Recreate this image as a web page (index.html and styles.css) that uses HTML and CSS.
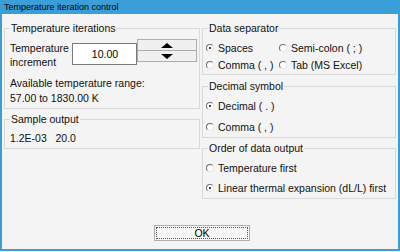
FILE: index.html
```html
<!DOCTYPE html>
<html lang="en">
<head>
  <meta charset="UTF-8">
  <title>Temperature iteration control</title>
  <link rel="stylesheet" href="styles.css">
</head>
<body>
  <div class="window">
    <div class="titlebar">Temperature iteration control</div>
    <div class="content">
      <div class="columns">
        <div class="col col-left">
          <fieldset class="group group-temp">
            <legend>Temperature iterations</legend>
            <div class="incr-row">
              <label class="incr-label">Temperature<br>increment</label>
              <input class="incr-input" type="text" value="10.00">
              <div class="spinner">
                <div class="spin"><span class="arrow-up"></span></div>
                <div class="spin"><span class="arrow-down"></span></div>
              </div>
            </div>
            <p class="line range-title">Available temperature range:</p>
            <p class="line">57.00 to 1830.00 K</p>
          </fieldset>
          <fieldset class="group group-sample">
            <legend>Sample output</legend>
            <p class="line">1.2E-03&nbsp;&nbsp;&nbsp;20.0</p>
          </fieldset>
        </div>
        <div class="col col-right">
          <fieldset class="group group-sep">
            <legend>Data separator</legend>
            <div class="radio-grid">
              <label class="radio-opt"><span class="radio checked"></span>Spaces</label>
              <label class="radio-opt"><span class="radio"></span>Semi-colon ( ; )</label>
              <label class="radio-opt"><span class="radio"></span>Comma ( , )</label>
              <label class="radio-opt"><span class="radio"></span>Tab (MS Excel)</label>
            </div>
          </fieldset>
          <fieldset class="group group-dec">
            <legend>Decimal symbol</legend>
            <label class="radio-opt"><span class="radio checked"></span>Decimal ( . )</label>
            <label class="radio-opt"><span class="radio"></span>Comma ( , )</label>
          </fieldset>
          <fieldset class="group group-order">
            <legend>Order of data output</legend>
            <label class="radio-opt"><span class="radio"></span>Temperature first</label>
            <label class="radio-opt"><span class="radio checked"></span>Linear thermal expansion (dL/L) first</label>
          </fieldset>
        </div>
      </div>
      <div class="actions">
        <button class="ok-btn"><span class="focus">OK</span></button>
      </div>
    </div>
  </div>
</body>
</html>
```

FILE: styles.css
```css
* {
  box-sizing: border-box;
}
body {
  margin: 0;
  width: 400px;
  height: 252px;
  font-family: "Liberation Sans", Arial, sans-serif;
  font-size: 10.5px;
  color: #111;
  background: #f4f4f4;
}
.window {
  height: 251px;
  display: flex;
  flex-direction: column;
  border: 2px solid #3a9fd8;
  border-top: none;
  background: #f4f4f4;
}
.titlebar {
  height: 14px;
  margin: 0 -2px;
  padding-left: 4px;
  background: #3a9fd8;
  font-size: 9px;
  line-height: 14px;
  color: #000;
}
.content {
  flex: 1;
  display: flex;
  flex-direction: column;
  padding: 7px 2px 0 2px;
}
.columns {
  display: flex;
  gap: 2px;
}
.col {
  display: flex;
  flex-direction: column;
}
.col-left {
  width: 196px;
}
.col-right {
  width: 194px;
}
.group {
  margin: 0;
  padding: 0 2px 0 5px;
  border: 1px solid #d9d9d9;
  min-width: 0;
}
.group legend {
  padding: 0 1px;
  line-height: 14px;
}
.line {
  margin: 0;
  line-height: 15px;
}

/* temperature iterations */
.group-temp {
  padding-bottom: 2px;
}
.incr-row {
  display: flex;
  align-items: flex-start;
  margin-top: 4px;
}
.incr-label {
  width: 63px;
  margin-top: 2px;
  line-height: 14px;
}
.incr-input {
  width: 65px;
  height: 22px;
  margin: 4px 0 0 0;
  padding: 0;
  border: 1px solid #7a7a7a;
  background: #fff;
  font: inherit;
  text-align: center;
}
.spinner {
  width: 60px;
  height: 23px;
  display: flex;
  flex-direction: column;
}
.spin {
  flex: 1;
  display: flex;
  justify-content: center;
  align-items: center;
  border: 1px solid #adadad;
  background: #f0f0f0;
}
.spin + .spin {
  border-top: none;
}
.arrow-up {
  border-left: 6px solid transparent;
  border-right: 6px solid transparent;
  border-bottom: 5px solid #000;
}
.arrow-down {
  border-left: 6px solid transparent;
  border-right: 6px solid transparent;
  border-top: 5px solid #000;
}
.range-title {
  margin-top: 7px;
}
.group-sample {
  margin-top: 3px;
  padding-bottom: 3px;
}
.group-sample .line {
  margin-top: 5px;
  line-height: 14px;
}

/* radio groups */
.radio-opt {
  display: flex;
  align-items: center;
  white-space: nowrap;
}
.radio {
  position: relative;
  width: 8px;
  height: 8px;
  margin: 0 4px 0 1px;
  border-radius: 50%;
  border: 1px solid;
  border-color: #707070 #e6e6e6 #e6e6e6 #707070;
  background: #fff;
  flex: none;
}
.radio.checked::after {
  content: "";
  position: absolute;
  left: 2px;
  top: 2px;
  width: 2px;
  height: 2px;
  border-radius: 50%;
  background: #000;
}
.radio-grid {
  display: grid;
  grid-template-columns: 73px 1fr;
  margin-top: 4px;
  padding-bottom: 1px;
}
.group-sep .radio-opt {
  height: 17px;
}
.group-sep {
  padding-left: 2px;
}
.group-dec,
.group-order {
  padding-left: 2px;
  margin-top: 4px;
}
.group-dec legend,
.group-order legend,
.group-sep legend {
  margin-left: 3px;
}
.group-dec .radio-opt {
  height: 21px;
}
.group-dec .radio-opt:first-of-type {
  margin-top: 2px;
}
.group-order {
  margin-top: 3px;
}
.group-order .radio-opt {
  height: 20px;
}
.group-order .radio-opt:first-of-type {
  margin-top: 3px;
}

/* ok button */
.actions {
  display: flex;
  justify-content: center;
  margin-top: auto;
  padding-bottom: 8px;
}
.ok-btn {
  width: 96px;
  height: 16px;
  padding: 1px;
  margin-left: 4px;
  border: 1px solid #adadad;
  background: #f7f7f7;
  font: inherit;
  color: #000;
}
.focus {
  display: block;
  height: 100%;
  line-height: 11px;
  border: 1px dotted #555;
}
```
